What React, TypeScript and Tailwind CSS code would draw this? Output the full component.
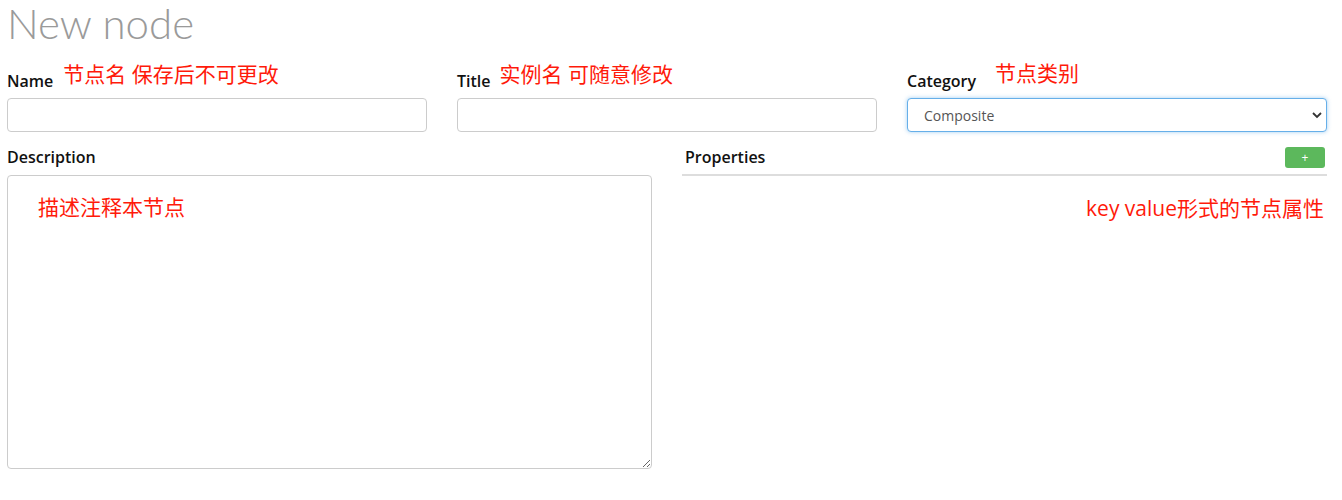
export default function App() {
  const label = "text-[16px] font-semibold leading-[20px] text-[#111]";
  const note = "text-[21px] leading-[24px] text-[#ff1a0a] whitespace-nowrap";
  return (
    <div
      className="bg-white h-[500px] pl-[7px] pr-[15px] overflow-hidden"
      style={{ fontFamily: '"Open Sans", "Noto Sans CJK SC", sans-serif' }}
    >
      <h1
        className="text-[42px] font-light leading-[46px] text-[#9a9a9a]"
        style={{ fontFamily: 'Lato, sans-serif' }}
      >
        New node
      </h1>

      <div className="grid grid-cols-3 gap-[30px] mt-[14px]">
        <div>
          <div className="flex items-end h-[31px]">
            <span className={label}>Name</span>
            <span className={`${note} ml-[10px] mb-[5px]`}>节点名 保存后不可更改</span>
          </div>
          <input className="mt-[7px] block w-full h-[34px] border border-[#ccc] rounded-[4px] px-3 outline-none" />
        </div>
        <div>
          <div className="flex items-end h-[31px]">
            <span className={label}>Title</span>
            <span className={`${note} ml-[9px] mb-[5px]`}>实例名 可随意修改</span>
          </div>
          <input className="mt-[7px] block w-full h-[34px] border border-[#ccc] rounded-[4px] px-3 outline-none" />
        </div>
        <div>
          <div className="flex items-end h-[31px]">
            <span className={label}>Category</span>
            <span className={`${note} ml-[19px] mb-[6px]`}>节点类别</span>
          </div>
          <div className="relative mt-[7px]">
            <select className="block w-full h-[34px] border border-[#66afe9] rounded-[4px] pl-[16px] text-[14px] text-[#555] appearance-none bg-white shadow-[0_0_4px_rgba(102,175,233,0.6)] outline-none">
              <option>Composite</option>
              <option>Action</option>
              <option>Condition</option>
              <option>Decorator</option>
            </select>
            <svg
              className="absolute right-[5px] top-[13px] pointer-events-none"
              width="10"
              height="8"
              viewBox="0 0 10 8"
            >
              <path d="M1 2 L5 6 L9 2" fill="none" stroke="#333" strokeWidth="1.8" />
            </svg>
          </div>
        </div>
      </div>

      <div className="grid grid-cols-2 gap-[30px] mt-[14px]">
        <div>
          <div className={`${label} h-[22px] leading-[22px]`}>Description</div>
          <div className="relative mt-[7px]">
            <textarea className="block w-full h-[294px] border border-[#ccc] rounded-[4px] p-3 outline-none" />
            <span className={`${note} absolute left-[31px] top-[20px] pointer-events-none`}>
              描述注释本节点
            </span>
          </div>
        </div>
        <div>
          <div className="flex items-center justify-between border-b-2 border-[#ddd] pb-[6px] pl-[3px] pr-[2px]">
            <span className={`${label} leading-[22px]`}>Properties</span>
            <button className="w-[40px] h-[21px] rounded-[3px] bg-[#5cb85c] text-white text-[12px] leading-[21px]">
              +
            </button>
          </div>
          <div className="flex justify-end pr-[3px] mt-[20px]">
            <span className={note}>key value形式的节点属性</span>
          </div>
        </div>
      </div>
    </div>
  );
}
